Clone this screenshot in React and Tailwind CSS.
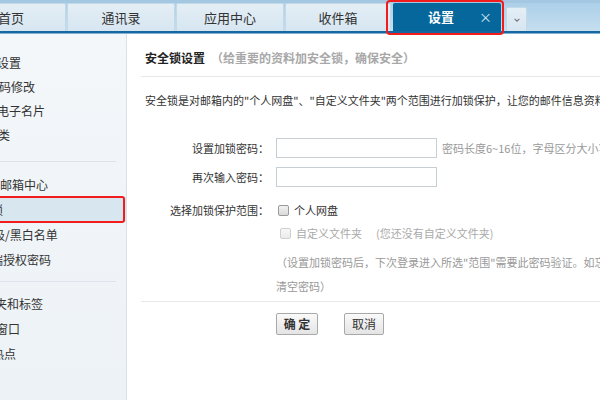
import { useState } from 'react';

const groupOne = [
  { text: '基本设置', shift: '-ml-[27px]' },
  { text: '密码修改', shift: '-ml-[13px]' },
  { text: '个人电子名片', shift: '-ml-[27px]' },
  { text: '邮件分类', shift: '-ml-[38px]' },
];

const groupTwo = [
  { text: '代收邮箱中心', shift: '-ml-[24px]' },
  { text: '安全锁', shift: '-ml-[33px]', active: true },
  { text: '反垃圾/黑白名单', shift: '-ml-[31px]' },
  { text: '客户端授权密码', shift: '-ml-[33px]' },
];

const groupThree = [
  { text: '文件夹和标签', shift: '-ml-[29px]' },
  { text: '读信窗口', shift: '-ml-[28px]' },
  { text: '新闻热点', shift: '-ml-[32px]' },
];

function SideItem({ item, tall }) {
  return (
    <div
      className={`relative whitespace-nowrap ${tall ? 'h-[25px] leading-[25px]' : 'h-[24px] leading-[24px]'} ${
        item.active ? 'bg-[#d7e6ef]' : ''
      }`}
    >
      <span className={`block ${item.shift}`}>{item.text}</span>
      {/* red highlight around the selected entry */}
      {item.active && (
        <div className="absolute -left-[4px] right-[1px] -top-[1px] -bottom-[1px] border-2 border-[#f21c1c] rounded-[3px]" />
      )}
    </div>
  );
}

function Tab({ label, className }) {
  return (
    <div
      className={`h-[28px] shrink-0 rounded-t-[2px] border border-b-0 border-[#c3d9e8] bg-gradient-to-b from-[#e4eef5] to-[#d6e6f1] flex items-center justify-center text-[13px] text-[#333] ${className}`}
    >
      {label}
    </div>
  );
}

export default function App() {
  const [personal, setPersonal] = useState(false);

  return (
    <div className="w-[600px] h-[400px] overflow-hidden bg-white font-['Noto_Sans_CJK_SC','Liberation_Sans',sans-serif] text-[#333]">
      {/* Top tab bar */}
      <header className="relative h-[34px] bg-gradient-to-b from-[#a9cee8] to-[#c8e0f0]">
        <div className="h-[3px] bg-[#a4c8e2]" />
        <div className="flex items-end h-[28px] -ml-[44px]">
          <Tab label="首页" className="w-[110px]" />
          <Tab label="通讯录" className="w-[108px] ml-[1px]" />
          <Tab label="应用中心" className="w-[108px] ml-[1px]" />
          <Tab label="收件箱" className="w-[106px] ml-[1px]" />
          <div className="relative h-[28px] w-[108px] ml-[2px] shrink-0 rounded-t-[2px] bg-[#05679c] flex items-center justify-center pr-[12px] text-[13px] font-bold text-white">
            设置
            <span className="absolute right-[9px] top-1/2 -translate-y-1/2 text-[13px] font-normal text-[#d8e8f3]">×</span>
          </div>
          <div className="h-[24px] w-[21px] ml-[5px] shrink-0 rounded-t-[2px] border border-b-0 border-[#c3d9e8] bg-gradient-to-b from-[#e4eef5] to-[#d6e6f1] flex items-center justify-center">
            <svg className="w-[8px] h-[8px] text-[#777]" viewBox="0 0 10 10" fill="none" stroke="currentColor" strokeWidth="1.4">
              <path d="M2 3.5l3 3 3-3" />
            </svg>
          </div>
        </div>
        <div className="h-[2px] bg-[#16679f]" />
        <div className="h-[1px] bg-[#7fb3d6]" />
        {/* red highlight around the active tab */}
        <div className="absolute left-[386px] top-0 w-[118px] h-[35px] border-2 border-[#f21c1c] rounded-[4px] z-10" />
      </header>

      <div className="flex h-[366px]">
        {/* Sidebar */}
        <aside className="w-[127px] shrink-0 border-r border-[#d9e1e7] bg-gradient-to-b from-[#f3f7fa] to-[#edf2f6] text-[12px] text-[#333] pt-[17px] overflow-hidden">
          {groupOne.map((item) => (
            <SideItem key={item.text} item={item} />
          ))}
          <div className="w-[116px] h-[1px] bg-[#dde3e8] mt-[14px]" />
          <div className="mt-[10px]">
            {groupTwo.map((item) => (
              <SideItem key={item.text} item={item} tall />
            ))}
          </div>
          <div className="w-[116px] h-[1px] bg-[#dde3e8] mt-[9px]" />
          <div className="mt-[9px]">
            {groupThree.map((item) => (
              <SideItem key={item.text} item={item} tall />
            ))}
          </div>
        </aside>

        {/* Main panel */}
        <main className="flex-1 min-w-0 pl-[14px] overflow-hidden">
          <div className="h-[43px] pt-[6px] pl-[4px] border-b border-[#e8e8e8] flex items-center whitespace-nowrap">
            <span className="text-[12px] font-bold text-[#222]">安全锁设置</span>
            <span className="ml-[6px] text-[12px] font-bold text-[#a8a8a8]">（给重要的资料加安全锁，确保安全）</span>
          </div>

          <p className="mt-[13px] pl-[4px] leading-[20px] text-[11px] whitespace-nowrap">
            安全锁是对邮箱内的"个人网盘"、"自定义文件夹"两个范围进行加锁保护，让您的邮件信息资料更加安全。
          </p>

          <div className="mt-[28px] text-[11px]">
            <div className="flex items-center h-[20px] whitespace-nowrap">
              <label className="w-[128px] shrink-0 text-right">设置加锁密码：</label>
              <input type="password" className="ml-[7px] w-[161px] shrink-0 h-[20px] border border-[#c6cfd6] bg-white outline-none" />
              <span className="ml-[5px] text-[#999]">密码长度6~16位，字母区分大小写</span>
            </div>
            <div className="flex items-center h-[20px] mt-[9px]">
              <label className="w-[128px] shrink-0 text-right">再次输入密码：</label>
              <input type="password" className="ml-[7px] w-[161px] shrink-0 h-[20px] border border-[#c6cfd6] bg-white outline-none" />
            </div>
            <div className="flex items-center h-[20px] mt-[13px]">
              <label className="w-[128px] shrink-0 text-right">选择加锁保护范围：</label>
              <button
                onClick={() => setPersonal(!personal)}
                className="ml-[9px] w-[11px] h-[11px] shrink-0 rounded-[2px] border border-[#9a9a9a] bg-gradient-to-b from-[#f2f2f2] to-[#d9d9d9]"
              />
              <span className="ml-[5px]">个人网盘</span>
            </div>
            <div className="flex items-center h-[20px] mt-[3px] pl-[137px] text-[#aaa] whitespace-nowrap">
              <span className="ml-[2px] w-[11px] h-[11px] shrink-0 rounded-[2px] border border-[#cfcfcf] bg-gradient-to-b from-[#f7f7f7] to-[#ebebeb]" />
              <span className="ml-[5px]">自定义文件夹</span>
              <span className="ml-[14px]">(您还没有自定义文件夹)</span>
            </div>
            <div className="mt-[7px] pl-[135px] leading-[24px] text-[#999]">
              <p className="whitespace-nowrap">（设置加锁密码后，下次登录进入所选"范围"需要此密码验证。如忘记密码，可在安全设置中</p>
              <p>清空密码）</p>
            </div>
          </div>

          <div className="mt-[3px] h-[1px] bg-[#e8e8e8]" />

          <div className="mt-[11px] pl-[135px] flex gap-[26px] text-[12px]">
            <button className="w-[42px] h-[22px] border border-[#a9a9a9] rounded-[2px] bg-gradient-to-b from-[#fafafa] to-[#e4e4e4] font-bold text-[#333]">
              确 定
            </button>
            <button className="w-[40px] h-[22px] border border-[#a9a9a9] rounded-[2px] bg-gradient-to-b from-[#fafafa] to-[#e4e4e4] text-[#333]">
              取消
            </button>
          </div>
        </main>
      </div>
    </div>
  );
}
